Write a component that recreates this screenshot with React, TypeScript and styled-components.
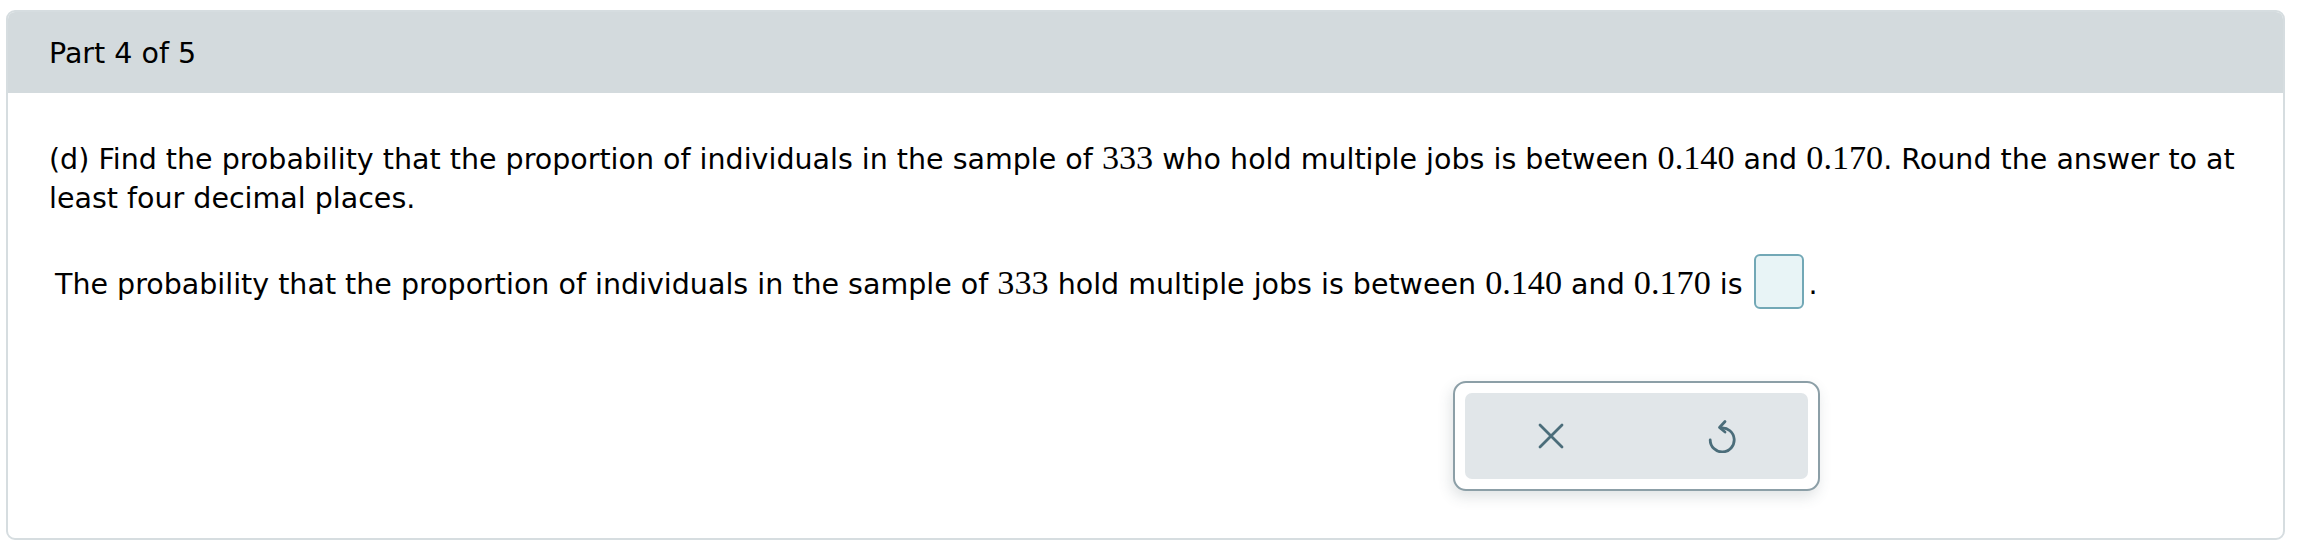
import React from "react";
import styled, { createGlobalStyle } from "styled-components";

const GlobalStyle = createGlobalStyle`
  html, body {
    margin: 0;
    padding: 0;
    background: #ffffff;
  }
  body {
    font-family: "DejaVu Sans", Verdana, sans-serif;
    color: #000000;
  }
`;

const Page = styled.div`
  padding: 10px 29px 13px 6px;
`;

const Panel = styled.section`
  border: 2px solid #d6dde0;
  border-radius: 9px;
  overflow: hidden;
  background: #ffffff;
`;

const Header = styled.header`
  height: 81px;
  display: flex;
  align-items: center;
  padding: 2px 0 0 41px;
  box-sizing: border-box;
  background: #d3dadd;
  font-size: 28.5px;
`;

const Body = styled.div`
  padding: 47px 18px 47px 41px;
  font-size: 28.5px;
  line-height: 39px;
`;

const Question = styled.p`
  margin: 0;
`;

const Statement = styled.p`
  margin: 36px 0 0 6px;
`;

const Num = styled.span`
  font-family: "Liberation Serif", "Times New Roman", serif;
  font-size: 34.2px;
  line-height: 1;
`;

const AnswerBox = styled.span`
  display: inline-block;
  width: 50px;
  height: 55px;
  box-sizing: border-box;
  margin: 0 5px 0 2px;
  vertical-align: -15px;
  border: 2px solid #72a8b6;
  border-radius: 6px;
  background: #e8f4f6;
`;

const ToolRow = styled.div`
  margin-top: 72px;
  padding-left: 1404px;
`;

const ToolFrame = styled.div`
  width: 367px;
  height: 110px;
  box-sizing: border-box;
  padding: 10px;
  border: 2px solid #8c9fa7;
  border-radius: 13px;
  background: #ffffff;
  box-shadow: -2px 6px 14px rgba(60, 80, 90, 0.16);
`;

const ToolBar = styled.div`
  height: 100%;
  display: flex;
  border-radius: 7px;
  background: #e1e6e9;
`;

const ToolButton = styled.button`
  flex: 1;
  display: flex;
  align-items: center;
  justify-content: center;
  border: none;
  background: transparent;
  padding: 0;
  cursor: pointer;
  color: #4b6d7a;
`;

const CloseIcon = () => (
  <svg width="26" height="26" viewBox="0 0 26 26" fill="none">
    <path
      d="M2 2 L24 24 M24 2 L2 24"
      stroke="currentColor"
      strokeWidth="2.8"
      strokeLinecap="round"
    />
  </svg>
);

const UndoIcon = () => (
  <svg width="30" height="34" viewBox="0 0 30 34" fill="none">
    <path
      d="M3.2 21 A12 12 0 1 0 14 9"
      stroke="currentColor"
      strokeWidth="2.8"
      strokeLinecap="round"
    />
    <path
      d="M18 2.5 L12.5 8.5 L18 13"
      stroke="currentColor"
      strokeWidth="2.8"
      strokeLinecap="round"
      strokeLinejoin="round"
    />
  </svg>
);

export default function App() {
  return (
    <>
      <GlobalStyle />
      <Page>
        <Panel>
          <Header>Part 4 of 5</Header>
          <Body>
            <Question>
              (d) Find the probability that the proportion of individuals in
              the sample of <Num>333</Num> who hold multiple jobs is between{" "}
              <Num>0.140</Num> and <Num>0.170</Num>. Round the answer to at
              least four decimal places.
            </Question>
            <Statement>
              The probability that the proportion of individuals in the sample
              of <Num>333</Num> hold multiple jobs is between <Num>0.140</Num>{" "}
              and <Num>0.170</Num> is <AnswerBox />.
            </Statement>
            <ToolRow>
              <ToolFrame>
                <ToolBar>
                  <ToolButton aria-label="Clear">
                    <CloseIcon />
                  </ToolButton>
                  <ToolButton aria-label="Undo">
                    <UndoIcon />
                  </ToolButton>
                </ToolBar>
              </ToolFrame>
            </ToolRow>
          </Body>
        </Panel>
      </Page>
    </>
  );
}
